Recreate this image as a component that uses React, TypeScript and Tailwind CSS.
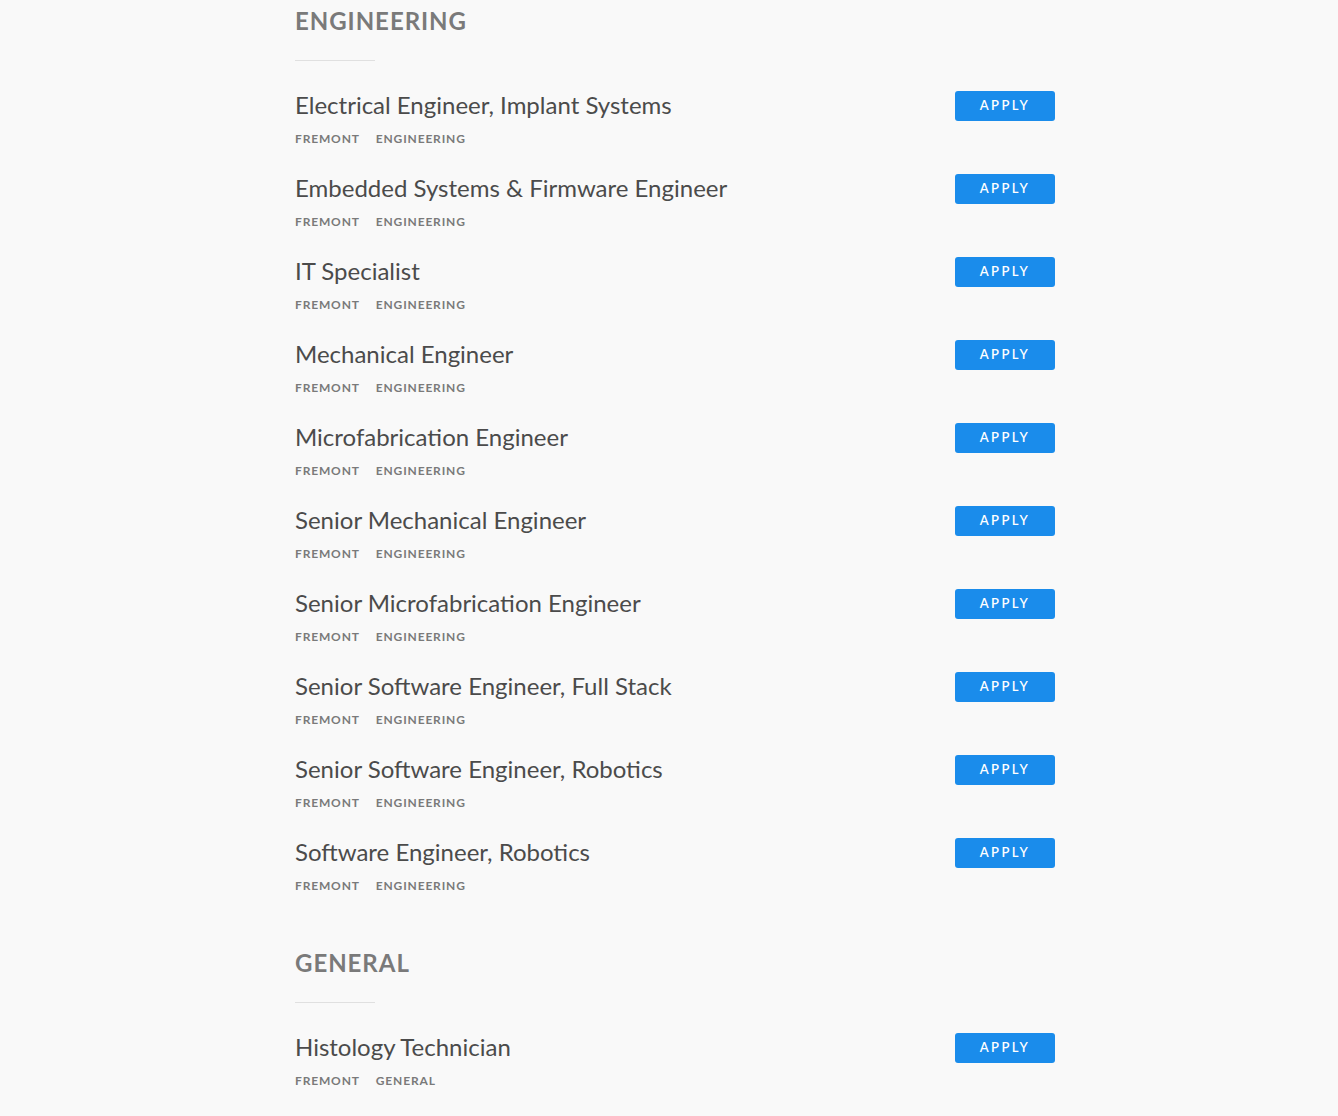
const engineering = [
  "Electrical Engineer, Implant Systems",
  "Embedded Systems & Firmware Engineer",
  "IT Specialist",
  "Mechanical Engineer",
  "Microfabrication Engineer",
  "Senior Mechanical Engineer",
  "Senior Microfabrication Engineer",
  "Senior Software Engineer, Full Stack",
  "Senior Software Engineer, Robotics",
  "Software Engineer, Robotics",
];

const general = ["Histology Technician"];

function JobRow({ title, team }: { title: string; team: string }) {
  return (
    <div className="flex items-start justify-between mb-[26px]">
      <div>
        <h3 className="text-[24px] leading-[30px] text-[#4b4b4b]">{title}</h3>
        <div className="mt-[11px] flex gap-[16px] text-[12px] leading-[16px] font-bold tracking-[0.07em] text-[#7a7a7a]">
          <span>FREMONT</span>
          <span>{team.toUpperCase()}</span>
        </div>
      </div>
      <button className="mt-[1px] w-[100px] h-[30px] rounded-[3px] bg-[#1a8ceb] text-white text-[13px] font-semibold tracking-[0.18em]">
        APPLY
      </button>
    </div>
  );
}

function Section({ name, jobs }: { name: string; jobs: string[] }) {
  return (
    <section>
      <h2 className="text-[24px] leading-[30px] font-bold tracking-[0.04em] text-[#7a7a7a]">
        {name.toUpperCase()}
      </h2>
      <div className="mt-[24px] mb-[29px] w-[80px] h-px bg-[#e0e0e0]" />
      {jobs.map((job) => (
        <JobRow key={job} title={job} team={name} />
      ))}
    </section>
  );
}

export default function App() {
  return (
    <div className="min-h-screen bg-[#f9f9f9] font-['Lato',sans-serif]">
      <div className="ml-[295px] w-[760px] pt-[6px] flex flex-col gap-[28px]">
        <Section name="Engineering" jobs={engineering} />
        <Section name="General" jobs={general} />
      </div>
    </div>
  );
}
